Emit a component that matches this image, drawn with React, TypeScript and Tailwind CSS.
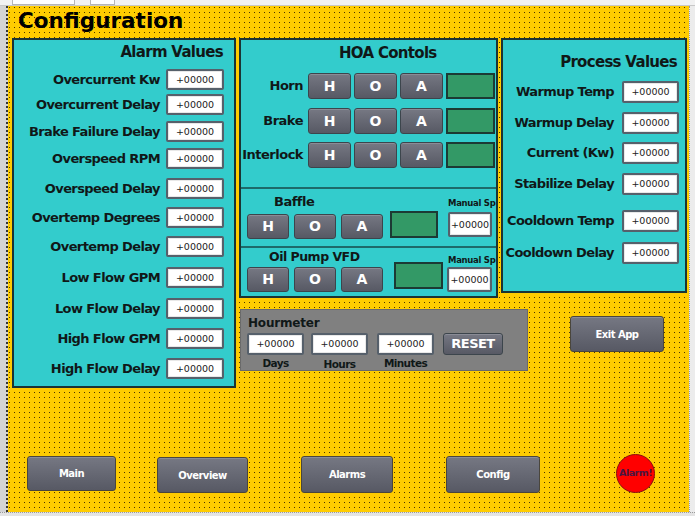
const alarmRows = [
  { label: 'Overcurrent Kw', mt: 'mt-0' },
  { label: 'Overcurrent Delay', mt: 'mt-[4px]' },
  { label: 'Brake Failure Delay', mt: 'mt-[6px]' },
  { label: 'Overspeed RPM', mt: 'mt-[6px]' },
  { label: 'Overspeed Delay', mt: 'mt-[9px]' },
  { label: 'Overtemp Degrees', mt: 'mt-[8px]' },
  { label: 'Overtemp Delay', mt: 'mt-[8px]' },
  { label: 'Low Flow GPM', mt: 'mt-[10px]' },
  { label: 'Low Flow Delay', mt: 'mt-[10px]' },
  { label: 'High Flow GPM', mt: 'mt-[9px]' },
  { label: 'High Flow Delay', mt: 'mt-[9px]' },
]

const processRows = [
  { label: 'Warmup Temp', mt: 'mt-0' },
  { label: 'Warmup Delay', mt: 'mt-[9px]' },
  { label: 'Current (Kw)', mt: 'mt-[8px]' },
  { label: 'Stabilize Delay', mt: 'mt-[9px]' },
  { label: 'Cooldown Temp', mt: 'mt-[15px]' },
  { label: 'Cooldown Delay', mt: 'mt-[10px]' },
]

const hoaRows = [
  { label: 'Horn', mt: 'mt-0' },
  { label: 'Brake', mt: 'mt-[9px]' },
  { label: 'Interlock', mt: 'mt-[8px]' },
]

const NumBox: React.FC<{ className?: string }> = ({ className = '' }) => (
  <div
    className={`flex items-center justify-center bg-white border-2 border-[#56606b] rounded-[2px] text-[9.5px] leading-none text-[#222] shadow-[inset_0_0_0_1px_#e8e8e8] ${className}`}
  >
    +00000
  </div>
)

const Btn: React.FC<{ className?: string; children: React.ReactNode }> = ({ className = '', children }) => (
  <div
    className={`flex items-center justify-center bg-linear-to-b from-[#767883] to-[#575964] border border-[#3c454c] rounded-[3px] text-white font-bold shadow-[inset_0_1px_0_#8a8c96] ${className}`}
  >
    {children}
  </div>
)

const Led: React.FC<{ className?: string }> = ({ className = '' }) => (
  <div className={`bg-[#339966] border-2 border-[#1c3a34] ${className}`} />
)

const HoaButtons: React.FC = () => (
  <div className="flex gap-[5px]">
    <Btn className="w-[42px] h-[25px] text-[14px]">H</Btn>
    <Btn className="w-[42px] h-[25px] text-[14px]">O</Btn>
    <Btn className="w-[42px] h-[25px] text-[14px]">A</Btn>
  </div>
)

export default function App() {
  return (
    <div className="w-[695px] h-[516px] flex flex-col overflow-hidden bg-[#ececec] font-['DejaVu_Sans',sans-serif] text-[#101818]">
      {/* editor chrome at top */}
      <div className="h-[6px] flex items-end bg-[#f2f2f2] border-b border-[#c8c8c8]">
        <div className="ml-[12px] w-[63px] h-[5px] bg-white border border-t-0 border-[#b5b5b5]" />
        <div className="ml-[15px] w-[25px] h-[5px] bg-white border border-t-0 border-[#b5b5b5]" />
      </div>

      <div className="flex flex-1 min-h-0">
        <div className="w-[8px] bg-[#d4d4d4] border-r-2 border-dotted border-[#333]" />

        {/* yellow canvas */}
        <div className="w-[681px] flex flex-col bg-[#ffcc00] bg-[radial-gradient(circle_at_1.5px_1.5px,#4a3300_0.45px,transparent_0.75px)] bg-size-[5px_5px]">
          <div className="h-[32px] pt-[3px] pl-[10px] text-[21.5px] leading-[24px] font-bold tracking-[0px] text-black">
            Configuration
          </div>

          <div className="flex items-start ml-[4px] gap-[3px]">
            {/* Alarm Values */}
            <div className="w-[224px] h-[350px] bg-[#33cccc] border-2 border-[#1b3434] flex flex-col">
              <div className="h-[29px] pt-[3px] pr-[11px] text-right text-[15px] leading-[18px] font-bold tracking-[-0.7px]">
                Alarm Values
              </div>
              {alarmRows.map((r) => (
                <div key={r.label} className={`flex items-center justify-end h-[21px] pr-[10px] ${r.mt}`}>
                  <span className="mr-[6px] text-[13px] font-bold tracking-[-0.6px] whitespace-nowrap">{r.label}</span>
                  <NumBox className="w-[58px] h-[21px]" />
                </div>
              ))}
            </div>

            <div className="flex flex-col">
              <div className="flex items-start gap-[3px]">
                {/* HOA Controls */}
                <div className="w-[259px] h-[260px] bg-[#33cccc] border-2 border-[#1b3434] flex flex-col">
                  <div className="h-[147px] flex flex-col">
                    <div className="h-[33px] pt-[4px] pl-[98px] text-[15px] leading-[18px] font-bold tracking-[-0.7px]">
                      HOA Contols
                    </div>
                    {hoaRows.map((r) => (
                      <div key={r.label} className={`flex items-center h-[26px] ${r.mt}`}>
                        <span className="w-[62px] text-right text-[13px] font-bold tracking-[-0.5px] whitespace-nowrap">
                          {r.label}
                        </span>
                        <div className="ml-[5px] flex gap-[3px]">
                          <Btn className="w-[43px] h-[26px] text-[14px]">H</Btn>
                          <Btn className="w-[43px] h-[26px] text-[14px]">O</Btn>
                          <Btn className="w-[43px] h-[26px] text-[14px]">A</Btn>
                        </div>
                        <Led className="ml-[3px] w-[49px] h-[26px]" />
                      </div>
                    ))}
                  </div>

                  {/* Baffle */}
                  <div className="h-[59px] border-t-2 border-[#1d6a6a] flex items-start">
                    <div className="ml-[6px] flex flex-col">
                      <span className="mt-[5px] pl-[27px] text-[13px] leading-[16px] font-bold tracking-[-0.5px]">Baffle</span>
                      <div className="mt-[4px]">
                        <HoaButtons />
                      </div>
                    </div>
                    <Led className="ml-[7px] mt-[22px] w-[48px] h-[27px]" />
                    <div className="ml-[10px] flex flex-col">
                      <span className="mt-[9px] text-[8.5px] leading-[10px] font-bold tracking-[-0.3px] whitespace-nowrap">
                        Manual Sp
                      </span>
                      <NumBox className="mt-[4px] w-[44px] h-[25px]" />
                    </div>
                  </div>

                  {/* Oil Pump VFD */}
                  <div className="flex-1 border-t-2 border-[#1d6a6a] flex items-start">
                    <div className="ml-[6px] flex flex-col">
                      <span className="mt-[1px] pl-[22px] text-[12.5px] leading-[16px] font-bold tracking-[-0.5px] whitespace-nowrap">
                        Oil Pump VFD
                      </span>
                      <div className="mt-[2px]">
                        <HoaButtons />
                      </div>
                    </div>
                    <Led className="ml-[11px] mt-[14px] w-[49px] h-[27px]" />
                    <div className="ml-[4px] flex flex-col">
                      <span className="mt-[7px] pl-[1px] text-[8.5px] leading-[10px] font-bold tracking-[-0.3px] whitespace-nowrap">
                        Manual Sp
                      </span>
                      <NumBox className="mt-[2px] w-[45px] h-[25px]" />
                    </div>
                  </div>
                </div>

                {/* Process Values */}
                <div className="w-[186px] h-[255px] bg-[#33cccc] border-2 border-[#1b3434] flex flex-col">
                  <div className="h-[41px] pt-[13px] pr-[8px] text-right text-[15px] leading-[18px] font-bold tracking-[-0.7px]">
                    Process Values
                  </div>
                  {processRows.map((r) => (
                    <div key={r.label} className={`flex items-center justify-end h-[22px] pr-[6px] ${r.mt}`}>
                      <span className="mr-[8px] text-[13px] font-bold tracking-[-0.6px] whitespace-nowrap">{r.label}</span>
                      <NumBox className="w-[57px] h-[22px]" />
                    </div>
                  ))}
                </div>
              </div>

              <div className="flex items-start mt-[11px]">
                {/* Hourmeter */}
                <div className="ml-[1px] w-[288px] h-[62px] bg-[#808080] border border-[#6a6a6a] pl-[6px] flex flex-col">
                  <span className="mt-[6px] ml-[1px] text-[12px] leading-[14px] font-bold tracking-[-0.2px]">Hourmeter</span>
                  <div className="mt-[3px] flex items-start">
                    <div className="flex flex-col items-center">
                      <NumBox className="w-[57px] h-[22px]" />
                      <span className="mt-[2px] text-[10.5px] leading-[12px] font-bold tracking-[-0.6px]">Days</span>
                    </div>
                    <div className="ml-[7px] flex flex-col items-center">
                      <NumBox className="w-[57px] h-[22px]" />
                      <span className="mt-[3px] text-[10.5px] leading-[12px] font-bold tracking-[-0.6px]">Hours</span>
                    </div>
                    <div className="ml-[9px] flex flex-col items-center">
                      <NumBox className="w-[57px] h-[22px]" />
                      <span className="mt-[2px] text-[10.5px] leading-[12px] font-bold tracking-[-0.6px]">Minutes</span>
                    </div>
                    <Btn className="ml-[9px] w-[60px] h-[22px] text-[13px] tracking-[-0.5px]">RESET</Btn>
                  </div>
                </div>

                <Btn className="ml-[42px] mt-[7px] w-[94px] h-[36px] text-[10px] tracking-[-0.5px] border-[#4a463c]">
                  Exit App
                </Btn>
              </div>
            </div>
          </div>

          {/* navigation */}
          <div className="flex items-start mt-[66px]">
            <Btn className="ml-[19px] mt-[2px] w-[89px] h-[35px] text-[10px] tracking-[-0.5px] border-[#4a463c]">Main</Btn>
            <Btn className="ml-[41px] mt-[3px] w-[91px] h-[36px] text-[10px] tracking-[-0.5px] border-[#4a463c]">
              Overview
            </Btn>
            <Btn className="ml-[53px] mt-[2px] w-[92px] h-[37px] text-[10px] tracking-[-0.5px] border-[#4a463c]">
              Alarms
            </Btn>
            <Btn className="ml-[53px] mt-[2px] w-[94px] h-[37px] text-[10px] tracking-[-0.5px] border-[#4a463c]">
              Config
            </Btn>
            <div className="ml-[76px] w-[39px] h-[39px] rounded-full bg-[#ff0000] border border-[#8a1010] flex items-center justify-center">
              <span className="text-[9.5px] font-bold tracking-[-0.5px] text-[#4b1640] whitespace-nowrap">Alarm!</span>
            </div>
          </div>
        </div>

        <div className="flex-1 bg-[#ececec] border-l border-dotted border-[#9a9a9a]" />
      </div>

      <div className="h-[4px] bg-[#e4e4e4] border-t border-dotted border-[#9a9a9a]" />
    </div>
  )
}
